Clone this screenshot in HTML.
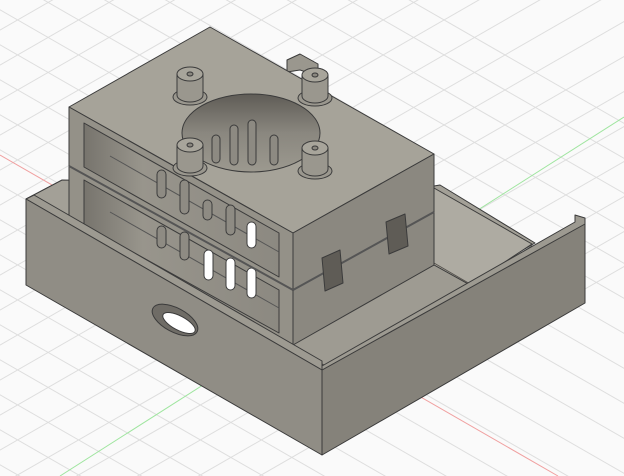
<!DOCTYPE html>
<html><head><meta charset="utf-8"><style>
html,body{margin:0;padding:0;background:#fff;width:624px;height:476px;overflow:hidden}
svg{display:block;overflow:hidden}
</style></head><body>
<svg width="624" height="476" viewBox="0 0 624 476" xmlns="http://www.w3.org/2000/svg">
<defs>
<linearGradient id="hole" x1="0" y1="0" x2="0" y2="1"><stop offset="0" stop-color="#5f5c56"/><stop offset="0.5" stop-color="#8a877f"/><stop offset="1" stop-color="#9c998f"/></linearGradient>
<linearGradient id="open" x1="0" y1="0" x2="1" y2="0"><stop offset="0" stop-color="#77746d"/><stop offset="0.3" stop-color="#98958c"/><stop offset="1" stop-color="#8c8981"/></linearGradient>
</defs>
<rect width="624" height="476" fill="#fafafa"/>
<g stroke="#dedede" stroke-width="1">
<g id="dr"><line x1="-600" y1="-300" x2="700" y2="447"/></g>
<use href="#dr" y="-280"/><use href="#dr" y="-245"/><use href="#dr" y="-210"/><use href="#dr" y="-175"/><use href="#dr" y="-140"/><use href="#dr" y="-105"/><use href="#dr" y="-70"/><use href="#dr" y="-35"/><use href="#dr" y="35"/><use href="#dr" y="70"/><use href="#dr" y="105"/><use href="#dr" y="140"/><use href="#dr" y="175"/><use href="#dr" y="210"/><use href="#dr" y="245"/><use href="#dr" y="280"/><use href="#dr" y="315"/><use href="#dr" y="350"/><use href="#dr" y="385"/><use href="#dr" y="420"/><use href="#dr" y="455"/><use href="#dr" y="490"/><use href="#dr" y="525"/><use href="#dr" y="560"/><use href="#dr" y="595"/><use href="#dr" y="630"/><use href="#dr" y="665"/><use href="#dr" y="700"/>
<g id="dl"><line x1="-200" y1="600" x2="900" y2="-32"/></g>
<use href="#dl" y="-560"/><use href="#dl" y="-525"/><use href="#dl" y="-490"/><use href="#dl" y="-455"/><use href="#dl" y="-420"/><use href="#dl" y="-385"/><use href="#dl" y="-350"/><use href="#dl" y="-315"/><use href="#dl" y="-280"/><use href="#dl" y="-245"/><use href="#dl" y="-210"/><use href="#dl" y="-175"/><use href="#dl" y="-140"/><use href="#dl" y="-105"/><use href="#dl" y="-70"/><use href="#dl" y="-35"/><use href="#dl" y="35"/><use href="#dl" y="70"/><use href="#dl" y="105"/><use href="#dl" y="140"/>
</g>
<line x1="0" y1="155" x2="558" y2="476" stroke="#f0a0a0"/>
<line x1="624" y1="117" x2="60" y2="476" stroke="#9fe59f"/>

<g stroke="#3b3b3b" stroke-width="1" stroke-linejoin="round">
<!-- back tab -->
<polygon points="287,60 300,54 318,64 318,76 300,70 287,72" fill="#9a978e"/>
<!-- tray back/inside -->
<polygon points="26,199 62,180 434,186 440,185 535,243 322,367" fill="#a3a097"/>
<polygon points="434,188 532,244 470,285 434,265" fill="#aeaba2"/>
<polygon points="292,345 434,265 470,285 532,246 540,250 327,367" fill="#9e9b92"/>
<line x1="434" y1="263" x2="520" y2="313" stroke="#55524d"/>
<!-- upper box -->
<polygon points="69,107 210,27 434,154 293,233" fill="#a6a399"/>
<polygon points="69,107 293,233 293,345 69,220" fill="#949188"/>
<polygon points="293,233 434,154 434,265 293,345" fill="#8b8880"/>
<!-- openings -->
<polygon points="84,123 279,233 279,277 84,167" fill="url(#open)"/>
<polygon points="84,180 279,290 279,333 84,225" fill="url(#open)"/>
<line x1="110" y1="156" x2="279" y2="252" stroke="#555"/>
<line x1="110" y1="212" x2="279" y2="308" stroke="#555"/>
<!-- slots -->
<g fill="#8e8b83">
<rect x="157" y="170" width="9" height="28" rx="4.5"/>
<rect x="180" y="180" width="9" height="34" rx="4.5"/>
<rect x="203" y="200" width="9" height="20" rx="4.5"/>
<rect x="226" y="205" width="9" height="30" rx="4.5"/>
<rect x="157" y="226" width="9" height="22" rx="4.5"/>
<rect x="180" y="232" width="9" height="28" rx="4.5"/>
</g>
<g fill="#ffffff">
<rect x="204" y="250" width="9" height="30" rx="4.5"/>
<rect x="226" y="258" width="9" height="32" rx="4.5"/>
<rect x="247" y="268" width="9" height="30" rx="4.5"/>
<rect x="247" y="222" width="9" height="26" rx="4.5"/>
</g>
<line x1="69" y1="166" x2="293" y2="290" stroke-width="2" stroke="#555"/>
<line x1="293" y1="290" x2="434" y2="212" stroke-width="2" stroke="#555"/>
<!-- clips -->
<polygon points="322,258 340,250 343,283 325,291" fill="#5f5c56"/>
<polygon points="386,222 405,214 408,246 389,254" fill="#5f5c56"/>
<!-- fan hole -->
<ellipse cx="251" cy="133" rx="69" ry="39" fill="url(#hole)"/>
<g fill="#8d8a82">
<rect x="230" y="125" width="8" height="40" rx="4"/>
<rect x="248" y="120" width="8" height="45" rx="4"/>
<rect x="270" y="135" width="8" height="30" rx="4"/>
<rect x="212" y="135" width="8" height="28" rx="4"/>
</g>
<!-- posts -->
<g fill="#9a978e">
<g id="post">
<ellipse cx="190" cy="97" rx="17" ry="8"/>
<path d="M177,74 V95 A13,7 0 0 0 203,95 V74 Z"/>
<ellipse cx="190" cy="74" rx="13" ry="7" fill="#a8a59b"/>
<ellipse cx="190" cy="74" rx="3" ry="2" fill="#8a877f"/>
</g>
<use href="#post" x="125" y="1"/>
<use href="#post" x="0" y="71"/>
<use href="#post" x="125" y="74"/>
</g>
<!-- tray front -->
<polygon points="26,199 34,195 322,361 322,370" fill="#9d9a91"/>
<polygon points="26,199 322,370 322,455 26,285" fill="#908d85"/>
<polygon points="322,370 585,222 585,303 322,455" fill="#85827a"/>
<polygon points="322,366 575,222 575,215 585,218 585,224 322,370" fill="#9d9a91"/>
<!-- oval -->
<ellipse cx="175" cy="320" rx="25" ry="12" transform="rotate(28 175 320)" fill="#6f6c66"/>
<ellipse cx="179" cy="323" rx="18" ry="7" transform="rotate(28 179 323)" fill="#ffffff"/>
</g>
</svg>
</body></html>
